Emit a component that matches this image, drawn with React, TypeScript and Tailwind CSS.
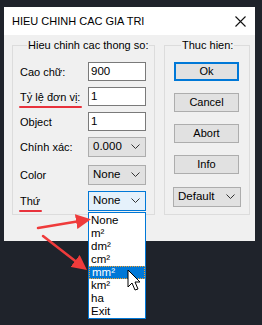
import React from "react";

const font = { fontFamily: '"Liberation Sans", Arial, sans-serif' };

function Chevron() {
  return (
    <svg width="9" height="6" viewBox="0 0 9 6" className="shrink-0">
      <path d="M0.5 0.5 L4.5 4.5 L8.5 0.5" fill="none" stroke="#333" strokeWidth="1" />
    </svg>
  );
}

function TextBox({ value }: { value: string }) {
  return (
    <div className="flex h-[19px] w-[58px] items-center border border-[#7a7a7a] bg-white pl-[2px] text-[11.5px] text-black">
      {value}
    </div>
  );
}

function Select({ value, w = "w-[58px]", active = false }: { value: string; w?: string; active?: boolean }) {
  return (
    <div
      className={`flex h-[20px] ${w} items-center justify-between border pl-[4px] pr-[5px] text-[11.5px] text-black ${
        active ? "border-[#0078d7] bg-[#e5f1fb]" : "border-[#adadad] bg-[#e1e1e1]"
      }`}
    >
      <span>{value}</span>
      <Chevron />
    </div>
  );
}

function Btn({ label, primary = false }: { label: string; primary?: boolean }) {
  return (
    <div
      className={`flex h-[19px] w-[65px] items-center justify-center bg-[#e1e1e1] text-[11px] text-black ${
        primary ? "border-2 border-[#0078d7]" : "border border-[#adadad]"
      }`}
    >
      {label}
    </div>
  );
}

function Row({ label, children, mark = false, className = "" }: { label: string; children: React.ReactNode; mark?: boolean; className?: string }) {
  return (
    <div className={`flex h-[19px] items-center justify-between ${className}`}>
      <span className="relative whitespace-nowrap text-[11px] leading-[14px] text-black">
        {label}
        {mark && <span className="absolute -bottom-[4px] -left-[1px] -right-[2px] h-[2px] rounded bg-[#e8323c]" />}
      </span>
      {children}
    </div>
  );
}

const items = ["None", "m²", "dm²", "cm²", "mm²", "km²", "ha", "Exit"];

export default function App() {
  return (
    <div className="relative h-[325px] w-[262px] overflow-hidden bg-[#1f232b] pl-[4px] pt-[7px]" style={font}>
      <div className="flex h-[234px] w-[251px] flex-col bg-[#f0f0f0]">
        <div className="flex h-[28px] items-center justify-between bg-white pl-[8px] pr-[9px]">
          <span className="whitespace-nowrap text-[11px] text-black">HIEU CHINH CAC GIA TRI</span>
          <svg width="11" height="11" viewBox="0 0 11 11">
            <path d="M0.5 0.5 L10.5 10.5 M10.5 0.5 L0.5 10.5" stroke="#111" strokeWidth="1.1" />
          </svg>
        </div>
        <div className="flex gap-[9px] pl-[8px] pt-[3px]">
          <fieldset className="h-[177px] w-[143px] min-w-0 shrink-0 border border-[#dcdcdc] pl-[7px] pr-[8px]">
            <legend className="ml-[7px] whitespace-nowrap px-[1px] text-[11px] leading-[14px] text-black">Hieu chinh cac thong so:</legend>
            <Row label="Cao chữ:" className="mt-[10px]">
              <TextBox value="900" />
            </Row>
            <Row label="Tỷ lệ đơn vị:" mark className="mt-[6px]">
              <TextBox value="1" />
            </Row>
            <Row label="Object" className="mt-[6px]">
              <TextBox value="1" />
            </Row>
            <Row label="Chính xác:" className="mt-[6px]">
              <Select value="0.000" />
            </Row>
            <Row label="Color" className="mt-[9px]">
              <Select value="None" />
            </Row>
            <Row label="Thứ" mark className="mt-[7px]">
              <Select value="None" active />
            </Row>
          </fieldset>
          <fieldset className="h-[177px] w-[86px] min-w-0 shrink-0 border border-[#dcdcdc] pl-[9px]">
            <legend className="ml-[7px] whitespace-nowrap px-[1px] text-[11px] leading-[14px] text-black">Thuc hien:</legend>
            <div className="mt-[10px] flex flex-col gap-[12px]">
              <Btn label="Ok" primary />
              <Btn label="Cancel" />
              <Btn label="Abort" />
              <Btn label="Info" />
            </div>
            <div className="mt-[13px] -ml-[1px]">
              <Select value="Default" w="w-[68px]" />
            </div>
          </fieldset>
        </div>
      </div>

      {/* open dropdown list */}
      <div className="absolute left-[88px] top-[212px] w-[58px] border border-[#0078d7] bg-white pt-[1px] text-[11.5px] text-black">
        {items.map((it) => (
          <div
            key={it}
            className={`flex h-[13px] items-center pl-[2px] leading-[13px] ${
              it === "mm²" ? "border border-dotted border-[#f0a030] bg-[#0078d7] text-white" : ""
            }`}
          >
            {it}
          </div>
        ))}
      </div>

      {/* red arrows and cursor */}
      <svg className="pointer-events-none absolute left-0 top-0" width="262" height="325">
        <defs>
          <marker id="ah" markerWidth="6" markerHeight="6" refX="4" refY="3" orient="auto" markerUnits="strokeWidth">
            <path d="M0 0 L6 3 L0 6 Z" fill="#ef3b3b" />
          </marker>
        </defs>
        <line x1="38" y1="228" x2="86" y2="220" stroke="#ef3b3b" strokeWidth="2.5" strokeLinecap="round" markerEnd="url(#ah)" />
        <line x1="43" y1="236" x2="83" y2="267" stroke="#ef3b3b" strokeWidth="2.5" strokeLinecap="round" markerEnd="url(#ah)" />
        <path
          d="M128 270 L128 287 L132 283 L135 290 L138 289 L135 282 L140 282 Z"
          fill="#fff"
          stroke="#000"
          strokeWidth="1"
          strokeLinejoin="round"
        />
      </svg>
    </div>
  );
}
